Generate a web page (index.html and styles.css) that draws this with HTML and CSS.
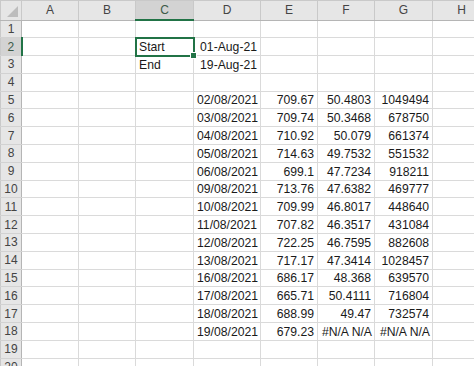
FILE: index.html
```html
<!DOCTYPE html>
<html lang="en">
    <head>
        <meta charset="UTF-8">
        <meta name="viewport" content="width=device-width, initial-scale=1.0">
        <title>Planilha</title>
        <link rel="stylesheet" href="styles.css">
    </head>
    <body>
        <table class="sheet">
            <colgroup>
                <col class="c-row"><col class="c-a"><col class="c-b"><col class="c-c"><col class="c-d">
                <col class="c-e"><col class="c-f"><col class="c-g"><col class="c-h">
            </colgroup>
            <thead>
                <tr>
                    <th class="corner"><span class="tri"></span></th>
                    <th>A</th><th>B</th><th class="hl-col">C</th><th>D</th><th>E</th><th>F</th><th>G</th><th>H</th>
                </tr>
            </thead>
            <tbody>
                <tr><th>1</th><td></td><td></td><td></td><td></td><td></td><td></td><td></td><td></td></tr>
                <tr><th class="hl-row">2</th><td></td><td></td><td class="sel">Start</td><td class="num">01-Aug-21</td><td></td><td></td><td></td><td></td></tr>
                <tr><th>3</th><td></td><td></td><td>End</td><td class="num">19-Aug-21</td><td></td><td></td><td></td><td></td></tr>
                <tr><th>4</th><td></td><td></td><td></td><td></td><td></td><td></td><td></td><td></td></tr>
                <tr><th>5</th><td></td><td></td><td></td><td class="num">02/08/2021</td><td class="num">709.67</td><td class="num">50.4803</td><td class="num">1049494</td><td></td></tr>
                <tr><th>6</th><td></td><td></td><td></td><td class="num">03/08/2021</td><td class="num">709.74</td><td class="num">50.3468</td><td class="num">678750</td><td></td></tr>
                <tr><th>7</th><td></td><td></td><td></td><td class="num">04/08/2021</td><td class="num">710.92</td><td class="num">50.079</td><td class="num">661374</td><td></td></tr>
                <tr><th>8</th><td></td><td></td><td></td><td class="num">05/08/2021</td><td class="num">714.63</td><td class="num">49.7532</td><td class="num">551532</td><td></td></tr>
                <tr><th>9</th><td></td><td></td><td></td><td class="num">06/08/2021</td><td class="num">699.1</td><td class="num">47.7234</td><td class="num">918211</td><td></td></tr>
                <tr><th>10</th><td></td><td></td><td></td><td class="num">09/08/2021</td><td class="num">713.76</td><td class="num">47.6382</td><td class="num">469777</td><td></td></tr>
                <tr><th>11</th><td></td><td></td><td></td><td class="num">10/08/2021</td><td class="num">709.99</td><td class="num">46.8017</td><td class="num">448640</td><td></td></tr>
                <tr><th>12</th><td></td><td></td><td></td><td class="num">11/08/2021</td><td class="num">707.82</td><td class="num">46.3517</td><td class="num">431084</td><td></td></tr>
                <tr><th>13</th><td></td><td></td><td></td><td class="num">12/08/2021</td><td class="num">722.25</td><td class="num">46.7595</td><td class="num">882608</td><td></td></tr>
                <tr><th>14</th><td></td><td></td><td></td><td class="num">13/08/2021</td><td class="num">717.17</td><td class="num">47.3414</td><td class="num">1028457</td><td></td></tr>
                <tr><th>15</th><td></td><td></td><td></td><td class="num">16/08/2021</td><td class="num">686.17</td><td class="num">48.368</td><td class="num">639570</td><td></td></tr>
                <tr><th>16</th><td></td><td></td><td></td><td class="num">17/08/2021</td><td class="num">665.71</td><td class="num">50.4111</td><td class="num">716804</td><td></td></tr>
                <tr><th>17</th><td></td><td></td><td></td><td class="num">18/08/2021</td><td class="num">688.99</td><td class="num">49.47</td><td class="num">732574</td><td></td></tr>
                <tr><th>18</th><td></td><td></td><td></td><td class="num">19/08/2021</td><td class="num">679.23</td><td class="num na">#N/A N/A</td><td class="num na">#N/A N/A</td><td></td></tr>
                <tr><th>19</th><td></td><td></td><td></td><td></td><td></td><td></td><td></td><td></td></tr>
                <tr><th>20</th><td></td><td></td><td></td><td></td><td></td><td></td><td></td><td></td></tr>
            </tbody>
        </table>
    </body>
</html>
```

FILE: styles.css
```css
*{
    font-family: "Liberation Sans", Arial, sans-serif;
}

body{
    margin: 0;
    background: #ffffff;
    overflow: hidden;
}

.sheet{
    border-collapse: collapse;
    table-layout: fixed;
    width: 490px;
    font-size: 12.2px;
    color: #1a1a1a;
}

.c-row{ width: 21px; }
.c-a, .c-b, .c-e, .c-f{ width: 57px; }
.c-c, .c-g, .c-h{ width: 58px; }
.c-d{ width: 67px; }

.sheet td{
    height: 17.8px;
    padding: 0 3px 1px;
    box-sizing: border-box;
    border: 1px solid #dadada;
    vertical-align: bottom;
    white-space: nowrap;
    line-height: 14px;
}

.sheet td.num{
    text-align: right;
}
.sheet td.na{
    padding: 0 2px 1px 1px;
}

/* cabeçalhos */
.sheet th{
    background: #e6e6e6;
    color: #444444;
    font-weight: normal;
    font-size: 12px;
    padding: 0;
    border: 1px solid #c9c9c9;
    text-align: center;
    line-height: 14px;
}

.sheet thead th{
    height: 18px;
    border-bottom-color: #b5b5b5;
}

.sheet tbody th{
    border-right-color: #b5b5b5;
    border-top-color: #d2d2d2;
    border-bottom-color: #d2d2d2;
}

.sheet th.hl-col{
    background: #d3d3d3;
    border-bottom: 2px solid #217346;
    color: #3c5a48;
}

.sheet th.hl-row{
    background: #d3d3d3;
    border-right: 2px solid #217346;
    color: #3c5a48;
}

.corner{
    position: relative;
}
.tri{
    position: absolute;
    right: 3px;
    bottom: 3px;
    width: 0;
    height: 0;
    border-left: 11px solid transparent;
    border-bottom: 11px solid #bdbdbd;
}

/* célula selecionada */
.sheet td.sel{
    position: relative;
    outline: 2px solid #217346;
    outline-offset: -1px;
}
.sheet td.sel::after{
    content: '';
    position: absolute;
    right: -4px;
    bottom: -4px;
    width: 5px;
    height: 5px;
    background: #217346;
    border: 1px solid #ffffff;
}
```
